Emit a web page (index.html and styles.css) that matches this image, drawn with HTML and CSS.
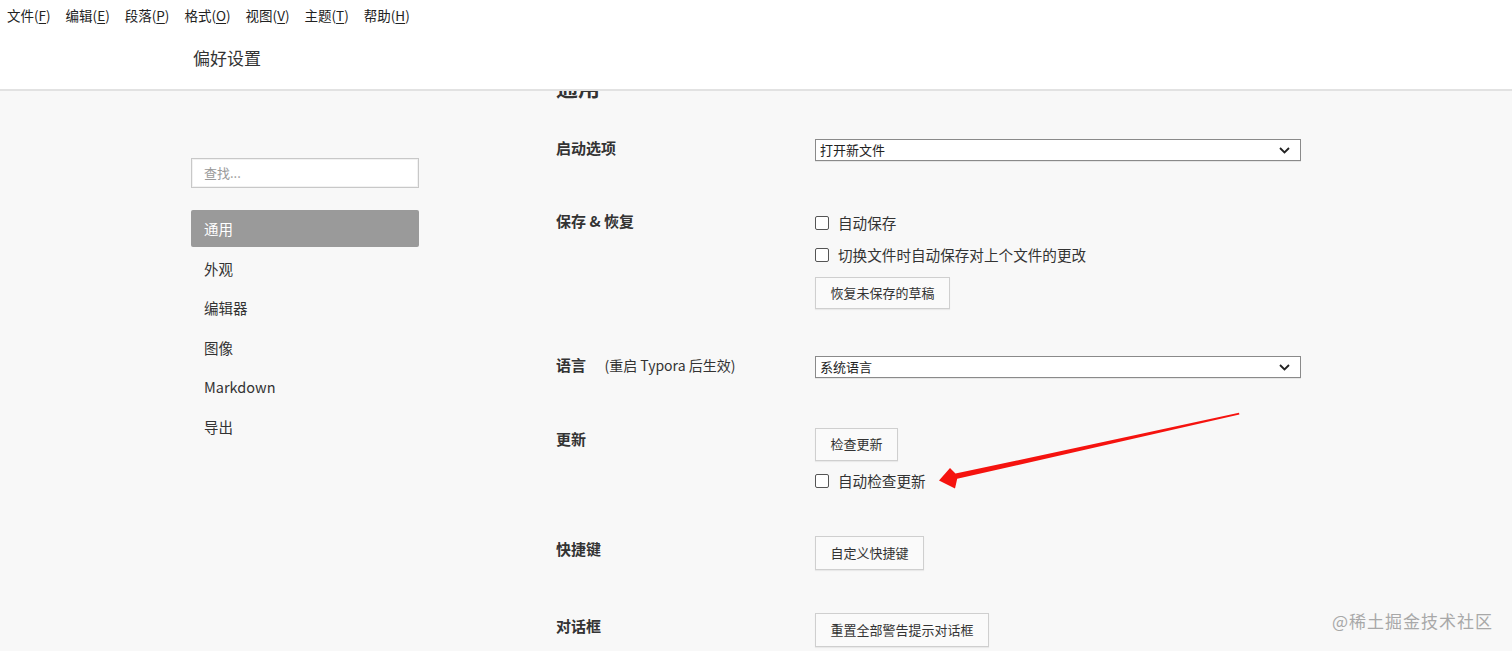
FILE: index.html
```html
<!DOCTYPE html>
<html lang="zh-CN">
<head>
<meta charset="utf-8">
<title>偏好设置</title>
<link rel="stylesheet" href="styles.css">
</head>
<body>
<header class="header">
  <nav class="menubar">
    <span class="menu-item">文件(<u>F</u>)</span>
    <span class="menu-item">编辑(<u>E</u>)</span>
    <span class="menu-item">段落(<u>P</u>)</span>
    <span class="menu-item">格式(<u>O</u>)</span>
    <span class="menu-item">视图(<u>V</u>)</span>
    <span class="menu-item">主题(<u>T</u>)</span>
    <span class="menu-item">帮助(<u>H</u>)</span>
  </nav>
  <div class="titlebar">偏好设置</div>
</header>

<div class="page">
  <aside class="sidebar">
    <div class="search">查找...</div>
    <ul class="nav">
      <li class="nav-item active">通用</li>
      <li class="nav-item">外观</li>
      <li class="nav-item">编辑器</li>
      <li class="nav-item">图像</li>
      <li class="nav-item">Markdown</li>
      <li class="nav-item">导出</li>
    </ul>
  </aside>

  <main class="main">
    <h2 class="section-title">通用</h2>

    <div class="row row-start">
      <div class="label">启动选项</div>
      <div class="control">
        <div class="select"><span>打开新文件</span><svg class="chev" width="11" height="7" viewBox="0 0 11 7"><path d="M1 1l4.5 4.5L10 1" fill="none" stroke="#222" stroke-width="1.8"/></svg></div>
      </div>
    </div>

    <div class="row row-save">
      <div class="label">保存 &amp; 恢复</div>
      <div class="control">
        <label class="check check-first"><span class="box"></span>自动保存</label>
        <label class="check"><span class="box"></span>切换文件时自动保存对上个文件的更改</label>
        <button class="btn btn-draft">恢复未保存的草稿</button>
      </div>
    </div>

    <div class="row row-lang">
      <div class="label">语言 <span class="hint">(重启 Typora 后生效)</span></div>
      <div class="control">
        <div class="select"><span>系统语言</span><svg class="chev" width="11" height="7" viewBox="0 0 11 7"><path d="M1 1l4.5 4.5L10 1" fill="none" stroke="#222" stroke-width="1.8"/></svg></div>
      </div>
    </div>

    <div class="row row-update">
      <div class="label">更新</div>
      <div class="control">
        <button class="btn">检查更新</button>
        <label class="check check-after-btn"><span class="box"></span>自动检查更新</label>
      </div>
    </div>

    <div class="row row-keys">
      <div class="label">快捷键</div>
      <div class="control">
        <button class="btn btn-tall">自定义快捷键</button>
      </div>
    </div>

    <div class="row row-dialog">
      <div class="label">对话框</div>
      <div class="control">
        <button class="btn btn-tall">重置全部警告提示对话框</button>
      </div>
    </div>
  </main>
</div>

<svg class="arrow" width="1512" height="651" viewBox="0 0 1512 651">
  <polygon points="939,480.5 950,468 955.5,473.6 1239,412.8 1239.4,414.4 957.2,478.8 955,488.5" fill="#f5130f"/>
</svg>

<div class="watermark">@稀土掘金技术社区</div>
</body>
</html>
```

FILE: styles.css
```css
* { box-sizing: border-box; }

html, body {
  margin: 0;
  padding: 0;
  height: 651px;
  overflow: hidden;
}

body {
  background: #f8f8f8;
  color: #333;
  font-family: "Noto Sans CJK SC", "Microsoft YaHei", sans-serif;
  position: relative;
}

.header {
  position: relative;
  z-index: 2;
  background: #fff;
  border-bottom: 2px solid #e2e2e2;
  height: 91px;
}

.menubar {
  display: flex;
  gap: 15px;
  padding-left: 7px;
  height: 30px;
  align-items: center;
  font-size: 13.5px;
  color: #222;
}

.menu-item u { text-underline-offset: 2px; }

.titlebar {
  padding-left: 193px;
  padding-top: 16px;
  font-size: 17px;
  line-height: 24px;
  color: #333;
}

.page {
  display: flex;
  align-items: flex-start;
}

.sidebar {
  margin-left: 191px;
  width: 228px;
  padding-top: 67px;
}

.search {
  height: 30px;
  border: 1px solid #c8c8c8;
  background: #fff;
  padding-left: 12px;
  font-size: 13px;
  line-height: 27px;
  color: #999;
  box-shadow: inset 0 0 0 1px #f2f2f2;
}

.nav {
  list-style: none;
  margin: 22px 0 0;
  padding: 0;
  display: flex;
  flex-direction: column;
  gap: 2.5px;
}

.nav-item {
  height: 37px;
  line-height: 37px;
  padding-left: 13px;
  font-size: 14.5px;
  color: #333;
  border-radius: 2px;
}

.nav-item.active {
  background: #9a9a9a;
  color: #fff;
}

.main {
  margin-left: 137px;
  margin-top: -20px;
  width: 745px;
}

.section-title {
  margin: 0;
  font-size: 22px;
  line-height: 30px;
  font-weight: bold;
  color: #333;
}

.row {
  display: grid;
  grid-template-columns: 259px 486px;
  align-items: start;
}

.label {
  font-size: 15px;
  font-weight: bold;
  line-height: 22px;
  color: #333;
  margin-top: -2px;
}

.row-save .label { margin-top: -4px; }
.row-update .label { margin-top: 0; }
.row-keys .label,
.row-dialog .label { margin-top: 2px; }

.hint {
  font-weight: normal;
  font-size: 14px;
  margin-left: 15px;
}

.control {
  display: flex;
  flex-direction: column;
  align-items: flex-start;
}

.row-start { margin-top: 38px; }
.row-save { margin-top: 53px; }
.row-lang { margin-top: 47px; }
.row-update { margin-top: 50px; }
.row-keys { margin-top: 46px; }
.row-dialog { margin-top: 43px; }

.select {
  width: 486px;
  height: 22px;
  border: 1px solid #8a8a8a;
  background: #fff;
  display: flex;
  align-items: center;
  justify-content: space-between;
  padding: 0 10px 2px 4px;
  font-size: 13px;
  color: #222;
  box-shadow: 0 1px 0 #e6e6e6;
}

.chev { display: block; margin-top: 2px; }

.check {
  display: flex;
  align-items: center;
  height: 20px;
  font-size: 14.6px;
  color: #333;
}

.check-first { margin-top: -2px; }
.check + .check { margin-top: 12px; }

.box {
  width: 14px;
  height: 14px;
  border: 1px solid #555;
  border-radius: 2px;
  background: #fff;
  margin-right: 9px;
  margin-top: 1px;
}

.btn {
  font-family: inherit;
  font-size: 13px;
  color: #333;
  background: #fafafa;
  border: 1px solid #cfcfcf;
  height: 33px;
  padding: 0 14.5px 2px;
  border-radius: 0;
  box-shadow: 0 1px 1px rgba(0,0,0,0.06);
}

.btn-draft { margin-top: 13px; height: 32px; }
.btn-tall { height: 34px; }
.check-after-btn { margin-top: 9px; }

.arrow {
  position: absolute;
  left: 0;
  top: 0;
  pointer-events: none;
  z-index: 3;
}

.watermark {
  position: absolute;
  right: 19px;
  top: 609px;
  font-size: 17px;
  line-height: 24px;
  color: #a8a8a8;
  letter-spacing: 1px;
  z-index: 3;
}
```
